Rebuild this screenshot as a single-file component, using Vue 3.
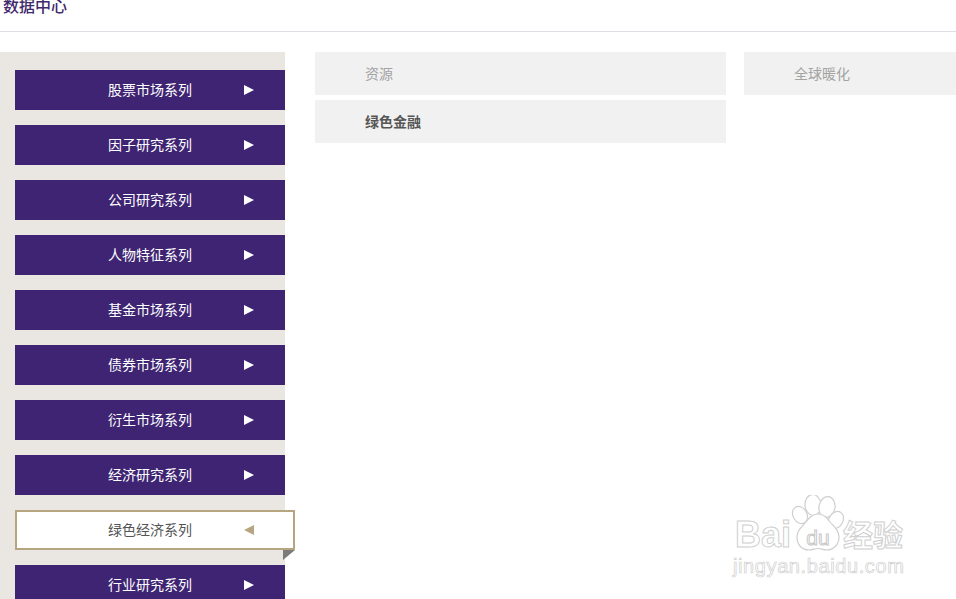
<template>
  <div class="page">
    <div class="head">
      <h1 class="title">数据中心</h1>
    </div>
    <div class="main">
      <ul class="side">
        <li v-for="item in menu" :key="item" class="side-item" :class="{ active: item === current }">
          <span class="side-text">{{ item }}</span>
          <i class="arrow"></i>
          <i v-if="item === current" class="fold"></i>
        </li>
      </ul>
      <div class="content">
        <div class="col col-left">
          <div class="tag">资源</div>
          <div class="tag on">绿色金融</div>
        </div>
        <div class="col col-right">
          <div class="tag">全球暖化</div>
        </div>
      </div>
    </div>
    <div class="mark">
      <div class="mark-logo">
        <span class="mark-bai">Bai</span>
        <svg class="paw" width="56" height="58" viewBox="0 0 56 58">
          <g fill="#fff" stroke="#cfcfcf" stroke-width="1.2">
            <ellipse cx="10" cy="20" rx="7" ry="9" transform="rotate(-30 10 20)" />
            <ellipse cx="23" cy="10" rx="8" ry="10.5" transform="rotate(-5 23 10)" />
            <ellipse cx="37" cy="12" rx="8" ry="10.5" transform="rotate(10 37 12)" />
            <ellipse cx="46" cy="25" rx="7" ry="9" transform="rotate(30 46 25)" />
            <path d="M28 19c6 0 9 4 12 8 3 4 9 7 9 15 0 8-6 13-12 13-4 0-6-1.500-9-1.500S23 55 19 55C12 55 7 50 7 42c0-8 6-11 9-15 3-4 6-8 12-8z" />
          </g>
          <text x="28" y="50" class="paw-text" text-anchor="middle">du</text>
        </svg>
        <span class="mark-cn">经验</span>
      </div>
      <div class="mark-url">jingyan.baidu.com</div>
    </div>
  </div>
</template>

<script setup>
const menu = [
  '股票市场系列',
  '因子研究系列',
  '公司研究系列',
  '人物特征系列',
  '基金市场系列',
  '债券市场系列',
  '衍生市场系列',
  '经济研究系列',
  '绿色经济系列',
  '行业研究系列'
]
const current = '绿色经济系列'
</script>

<style>
html,
body {
  margin: 0;
  overflow: hidden;
}
</style>

<style scoped>
.page {
  position: relative;
  width: 956px;
  height: 599px;
  overflow: hidden;
  background: #fff;
  font-family: "Liberation Sans", "Noto Sans CJK SC", sans-serif;
}

.head {
  height: 31px;
  border-bottom: 1px solid #dcdfe3;
  padding-left: 3px;
}

.title {
  margin: 0;
  font-size: 16px;
  line-height: 14px;
  font-weight: 500;
  color: #3f2a6b;
}

.main {
  display: flex;
  margin-top: 20px;
}

.side {
  list-style: none;
  margin: 0;
  padding: 18px 0 0 15px;
  width: 270px;
  height: 600px;
  background: #eae7e2;
  flex-shrink: 0;
}

.side-item {
  position: relative;
  display: flex;
  align-items: center;
  height: 40px;
  margin-bottom: 15px;
  background: #3e2472;
  color: #fff;
  font-size: 14px;
}

.side-text {
  width: 177px;
  text-align: right;
  padding-bottom: 2px;
}

.arrow {
  margin-left: 52px;
  border-style: solid;
  border-width: 5px 0 5px 10px;
  border-color: transparent transparent transparent #fff;
}

.side-item.active {
  width: 280px;
  box-sizing: border-box;
  border: 2px solid #b5a67f;
  background: #fff;
  color: #555;
}

.side-item.active .side-text {
  width: 175px;
}

.side-item.active .arrow {
  border-width: 5px 10px 5px 0;
  border-color: transparent #b5a67f transparent transparent;
}

.fold {
  position: absolute;
  right: -2px;
  top: 38px;
  border-style: solid;
  border-width: 10px 12px 0 0;
  border-color: #7b7b7b transparent transparent transparent;
}

.content {
  display: flex;
  margin-left: 30px;
  gap: 18px;
  flex: 1;
}

.col {
  display: flex;
  flex-direction: column;
  gap: 5px;
}

.col-left {
  width: 411px;
  flex-shrink: 0;
}

.col-right {
  flex: 1;
}

.tag {
  height: 43px;
  line-height: 45px;
  padding-left: 50px;
  background: #f1f1f1;
  color: #a3a3a3;
  font-size: 14px;
}

.tag.on {
  color: #555;
  font-weight: 700;
}

/* watermark sits over the page */
.mark {
  position: absolute;
  left: 733px;
  top: 495px;
  width: 175px;
  color: #fff;
  -webkit-text-stroke: 1px #cfcfcf;
}

.mark-logo {
  display: flex;
  align-items: flex-end;
  height: 58px;
}

.mark-bai {
  font-family: "Liberation Sans", sans-serif;
  font-size: 36px;
  font-weight: 700;
  line-height: 36px;
  width: 57px;
  margin-left: 2px;
  flex-shrink: 0;
}

.paw {
  margin-left: -2px;
  flex-shrink: 0;
  -webkit-text-stroke: 0;
}

.paw-text {
  font-family: "Liberation Sans", sans-serif;
  font-size: 21px;
  fill: #fff;
  stroke: #c8c8c8;
  stroke-width: 1;
}

.mark-cn {
  font-size: 30px;
  line-height: 34px;
  font-weight: 700;
  margin-left: -3px;
  white-space: nowrap;
}

.mark-url {
  margin-top: 2px;
  font-size: 20px;
  line-height: 22px;
  letter-spacing: 0.6px;
  -webkit-text-stroke: 0.7px #cfcfcf;
  white-space: nowrap;
}
</style>
